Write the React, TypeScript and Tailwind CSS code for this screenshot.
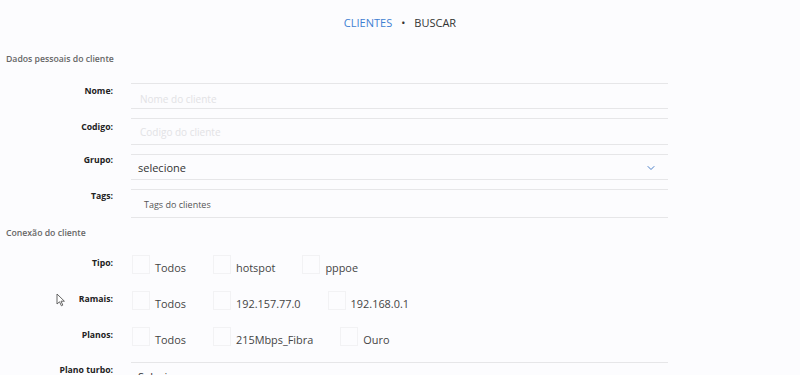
import { ChevronDown } from 'lucide-react'
import type { ReactNode } from 'react'

// Client search form: personal data fields + connection filters
function Label({ text, pt }: { text: string; pt: string }) {
  return (
    <div className={`w-[113px] shrink-0 text-right text-[8.7px] font-bold leading-[12px] text-[#222] ${pt}`}>
      {text}
    </div>
  )
}

function FieldRow({ label, labelPt, boxClass, children }: { label: string; labelPt: string; boxClass: string; children?: ReactNode }) {
  return (
    <div className="flex">
      <Label text={label} pt={labelPt} />
      <div className={`ml-[18px] w-[537px] border-y border-[#e6e6e8] ${boxClass}`}>{children}</div>
    </div>
  )
}

function OptionRow({ label, options }: { label: string; options: string[] }) {
  return (
    <div className="flex h-[36px]">
      <Label text={label} pt="pt-[8px]" />
      <div className="ml-[19px] flex gap-[27px] pt-[6px]">
        {options.map((opt) => (
          <div key={opt} className="flex items-start">
            <span className="h-[19px] w-[18px] border border-[#f2f2f4]" />
            <span className="ml-[5px] mt-[3px] text-[10.9px] leading-[19px] text-[#444]">{opt}</span>
          </div>
        ))}
      </div>
    </div>
  )
}

export default function App() {
  return (
    <div className="relative h-[375px] w-full overflow-hidden bg-[#fcfcfe] font-['Open_Sans',sans-serif]">
      <div className="flex h-[46px] items-center justify-center gap-[9px] text-[11px]">
        <span className="text-[#3f80d2]">CLIENTES</span>
        <span className="text-[#333]">•</span>
        <span className="text-[#333]">BUSCAR</span>
      </div>

      <div className="flex h-[28px] items-center pl-[6px] text-[8.7px] font-semibold text-[#666]">
        Dados pessoais do cliente
      </div>

      <div className="mt-[9px] flex flex-col gap-[9px]">
        <FieldRow label="Nome:" labelPt="pt-[2px]" boxClass="h-[26px] pl-[9px] pt-[9px]">
          <div className="text-[10px] leading-[12px] text-[#e2e2e5]">Nome do cliente</div>
        </FieldRow>
        <FieldRow label="Codigo:" labelPt="pt-[3px]" boxClass="h-[27px] pl-[9px] pt-[7px]">
          <div className="text-[10px] leading-[12px] text-[#e2e2e5]">Codigo do cliente</div>
        </FieldRow>
        <FieldRow label="Grupo:" labelPt="pt-0" boxClass="flex h-[26px] items-start justify-between pl-[7px] pr-[11px] pt-[6px]">
          <div className="text-[11px] leading-[14px] text-[#333]">selecione</div>
          <ChevronDown size={12} strokeWidth={2} className="mt-[1px] text-[#4a7fc8]" />
        </FieldRow>
        <FieldRow label="Tags:" labelPt="pt-[1px]" boxClass="h-[29px] pl-[13px] pt-[9px]">
          <div className="text-[9px] leading-[12px] text-[#555]">Tags do clientes</div>
        </FieldRow>
      </div>

      <div className="flex h-[31px] items-center pl-[6px] text-[8.7px] font-semibold text-[#666]">
        Conexão do cliente
      </div>

      <OptionRow label="Tipo:" options={['Todos', 'hotspot', 'pppoe']} />
      <OptionRow label="Ramais:" options={['Todos', '192.157.77.0', '192.168.0.1']} />
      <OptionRow label="Planos:" options={['Todos', '215Mbps_Fibra', 'Ouro']} />

      <div className="flex">
        <Label text="Plano turbo:" pt="pt-[7px]" />
        <div className="ml-[18px] mt-[5px] h-[26px] w-[537px] border-t border-[#e6e6e8] pl-[7px] pt-[7px] text-[11px] leading-[14px] text-[#333]">
          Selecione
        </div>
      </div>

      <svg className="absolute left-[56px] top-[293px]" width="10" height="14" viewBox="0 0 10 14">
        <path d="M1 1 L1 11 L3.5 8.8 L5.4 12.8 L6.8 12.1 L5 8.2 L8.4 8.2 Z" fill="#fff" stroke="#555" strokeWidth="0.9" strokeLinejoin="round" />
      </svg>
    </div>
  )
}
